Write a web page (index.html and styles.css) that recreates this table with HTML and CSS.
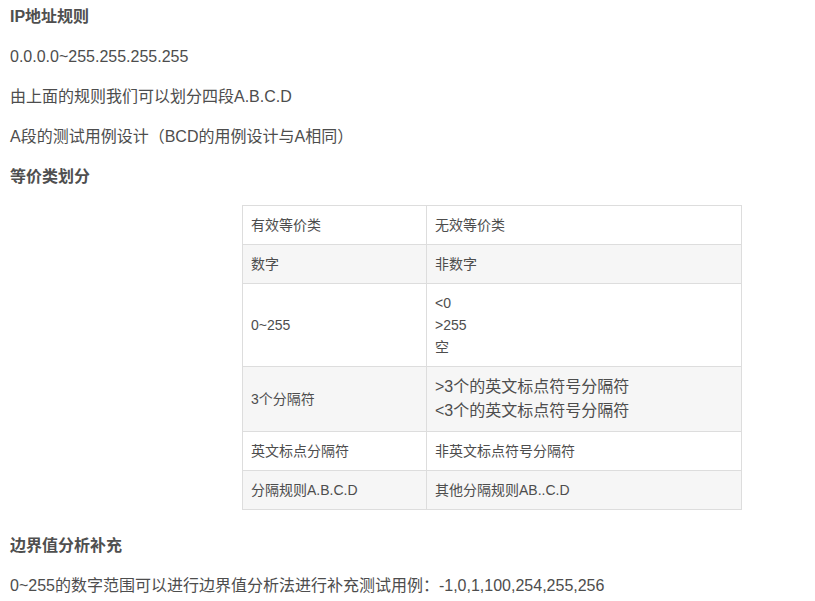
FILE: index.html
```html
<!DOCTYPE html>
<html lang="zh">
<head>
<meta charset="utf-8">
<title>IP地址规则</title>
<link rel="stylesheet" href="styles.css">
</head>
<body>
<div class="article">
  <h4 class="heading">IP地址规则</h4>
  <p class="text">0.0.0.0~255.255.255.255</p>
  <p class="text">由上面的规则我们可以划分四段A.B.C.D</p>
  <p class="text">A段的测试用例设计（BCD的用例设计与A相同）</p>
  <h4 class="heading">等价类划分</h4>
  <table class="cases">
    <tbody>
      <tr><td class="col-a">有效等价类</td><td class="col-b">无效等价类</td></tr>
      <tr><td class="col-a">数字</td><td class="col-b">非数字</td></tr>
      <tr><td class="col-a">0~255</td><td class="col-b">&lt;0<br>&gt;255<br>空</td></tr>
      <tr><td class="col-a">3个分隔符</td><td class="col-b"><span class="big">&gt;3个的英文标点符号分隔符<br>&lt;3个的英文标点符号分隔符</span></td></tr>
      <tr><td class="col-a">英文标点分隔符</td><td class="col-b">非英文标点符号分隔符</td></tr>
      <tr><td class="col-a">分隔规则A.B.C.D</td><td class="col-b">其他分隔规则AB..C.D</td></tr>
    </tbody>
  </table>
  <h4 class="heading">边界值分析补充</h4>
  <p class="text">0~255的数字范围可以进行边界值分析法进行补充测试用例：-1,0,1,100,254,255,256</p>
</div>
</body>
</html>
```
FILE: styles.css
```css
html, body {
  margin: 0;
  padding: 0;
  background: #ffffff;
}
body {
  font-family: "Liberation Sans", "Noto Sans CJK SC", sans-serif;
  color: #4d4d4d;
}
.article {
  padding: 5px 10px 0 10px;
}
.heading {
  margin: 0 0 16px 0;
  font-size: 16px;
  line-height: 24px;
  font-weight: bold;
  color: #4f4f4f;
}
.text {
  margin: 0 0 16px 0;
  font-size: 16px;
  line-height: 24px;
}
.cases {
  border-collapse: collapse;
  margin: 0 0 24px 232px;
  width: 500px;
  font-size: 14px;
  line-height: 22px;
}
.cases td {
  border: 1px solid #dddddd;
  padding: 8px 8px;
  vertical-align: middle;
  text-align: left;
}
.cases tr:nth-child(even) td {
  background: #f6f6f6;
}
.col-a {
  width: 167px;
}
.col-b {
  width: 298px;
}
.big {
  font-size: 16px;
  line-height: 24px;
}
```
